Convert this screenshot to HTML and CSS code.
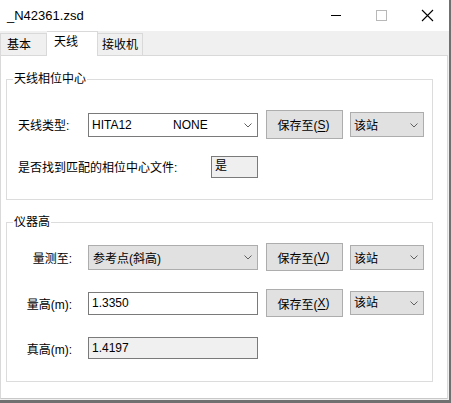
FILE: index.html
```html
<!DOCTYPE html>
<html lang="zh">
<head>
<meta charset="utf-8">
<link rel="stylesheet" href="styles.css">
</head>
<body>
<div class="window">
  <div class="titlebar">
    <span class="title">_N42361.zsd</span>
    <div class="controls">
      <svg class="ctl" width="46" height="31" viewBox="0 0 46 31"><line x1="20" y1="15.5" x2="30" y2="15.5" stroke="#000" stroke-width="1"/></svg>
      <svg class="ctl" width="46" height="31" viewBox="0 0 46 31"><rect x="19.5" y="10.5" width="10" height="10" fill="none" stroke="#b8b8b8" stroke-width="1"/></svg>
      <svg class="ctl" width="46" height="31" viewBox="0 0 46 31"><path d="M19 10 L30 21 M30 10 L19 21" stroke="#000" stroke-width="1.1" fill="none"/></svg>
    </div>
  </div>
  <div class="tabs">
    <div class="tab t1">基本</div>
    <div class="tab active">天线</div>
    <div class="tab t3">接收机</div>
  </div>
  <div class="page">
    <div class="group g1">
      <span class="legend">天线相位中心</span>
      <div class="row r1">
        <span class="lbl lbl-ant">天线类型:</span>
        <div class="combo edit">
          <span class="c1">HITA12</span><span>NONE</span>
          <svg class="chev" width="8" height="5" viewBox="0 0 8 5"><polyline points="0.5,0.5 4,4 7.5,0.5" fill="none" stroke="#606060" stroke-width="1"/></svg>
        </div>
        <div class="btn">保存至(<u>S</u>)</div>
        <div class="combo drop small">
          <span>该站</span>
          <svg class="chev" width="8" height="5" viewBox="0 0 8 5"><polyline points="0.5,0.5 4,4 7.5,0.5" fill="none" stroke="#606060" stroke-width="1"/></svg>
        </div>
      </div>
      <div class="row r2">
        <span class="lbl lbl-long">是否找到匹配的相位中心文件:</span>
        <div class="box">是</div>
      </div>
    </div>

    <div class="group g2">
      <span class="legend">仪器高</span>
      <div class="row q1">
        <span class="lbl lbl-r">量测至:</span>
        <div class="combo drop big">
          <span>参考点(斜高)</span>
          <svg class="chev" width="8" height="5" viewBox="0 0 8 5"><polyline points="0.5,0.5 4,4 7.5,0.5" fill="none" stroke="#606060" stroke-width="1"/></svg>
        </div>
        <div class="btn">保存至(<u>V</u>)</div>
        <div class="combo drop small">
          <span>该站</span>
          <svg class="chev" width="8" height="5" viewBox="0 0 8 5"><polyline points="0.5,0.5 4,4 7.5,0.5" fill="none" stroke="#606060" stroke-width="1"/></svg>
        </div>
      </div>
      <div class="row q2">
        <span class="lbl lbl-r">量高(m):</span>
        <div class="input">1.3350</div>
        <div class="btn">保存至(<u>X</u>)</div>
        <div class="combo drop small top">
          <span>该站</span>
          <svg class="chev" width="8" height="5" viewBox="0 0 8 5"><polyline points="0.5,0.5 4,4 7.5,0.5" fill="none" stroke="#606060" stroke-width="1"/></svg>
        </div>
      </div>
      <div class="row q3">
        <span class="lbl lbl-r">真高(m):</span>
        <div class="input ro">1.4197</div>
      </div>
    </div>
  </div>
</div>
</body>
</html>
```

FILE: styles.css
```css
html, body {
  margin: 0;
  padding: 0;
}
body {
  background: #707070;
  width: 451px;
  height: 403px;
  overflow: hidden;
  font-family: "Liberation Sans", "Noto Sans CJK SC", sans-serif;
  font-size: 12px;
  color: #000;
}
.window {
  width: 449px;
  height: 400px;
  background: #f0f0f0;
  display: flex;
  flex-direction: column;
}
.titlebar {
  height: 31px;
  background: #fff;
  display: flex;
  align-items: center;
  justify-content: space-between;
}
.title {
  font-size: 13px;
  padding-left: 7px;
  padding-bottom: 1px;
}
.controls {
  display: flex;
}
.ctl {
  display: block;
}
.tabs {
  height: 24px;
  display: flex;
  align-items: flex-end;
}
.tab {
  box-sizing: border-box;
  height: 22px;
  border: 1px solid #d9d9d9;
  border-bottom: none;
  background: #f0f0f0;
  padding: 2px 0 0 0;
  line-height: 18px;
}
.t1 {
  width: 47px;
  padding-left: 6px;
}
.t3 {
  width: 45px;
  padding-left: 4px;
  border-left: none;
}
.tab.active {
  position: relative;
  z-index: 1;
  width: 51px;
  height: 25px;
  margin-bottom: -1px;
  background: #fff;
  border-left: none;
  padding: 1px 0 0 7px;
}
.page {
  box-sizing: border-box;
  width: 448px;
  height: 344px;
  background: #fff;
  border: 1px solid #d9d9d9;
  border-bottom-color: #c8c8c8;
  padding: 23px 0 0 5px;
}
.group {
  position: relative;
  box-sizing: border-box;
  width: 427px;
  border: 1px solid #dcdcdc;
  padding-left: 11px;
}
.legend {
  position: absolute;
  top: -9px;
  left: 6px;
  background: #fff;
  padding: 0 1px;
  line-height: 16px;
}
.g1 {
  height: 121px;
  padding-top: 30px;
}
.g2 {
  height: 160px;
  margin-top: 22px;
  padding-top: 20px;
}
.row {
  display: flex;
  align-items: center;
}
.r1 { height: 29px; }
.r2 { height: 22px; margin-top: 17px; }
.q1 { height: 28px; }
.q2 { height: 28px; margin-top: 18px; }
.q3 { height: 22px; margin-top: 20px; }

.lbl {
  white-space: nowrap;
  box-sizing: border-box;
}
.lbl-ant { width: 70px; padding-bottom: 1px; }
.lbl-long { width: 193px; padding-bottom: 2px; }
.lbl-r {
  width: 54px;
  margin-right: 16px;
  text-align: right;
}
.combo, .input, .box, .btn {
  box-sizing: border-box;
  white-space: nowrap;
}
.combo {
  display: flex;
  align-items: center;
  position: relative;
  padding-left: 3px;
}
.combo .chev {
  position: absolute;
  right: 5px;
  top: 50%;
  margin-top: -2px;
}
.combo.edit {
  width: 170px;
  height: 24px;
  background: #fff;
  border: 1px solid #7a7a7a;
}
.c1 {
  display: inline-block;
  width: 81px;
}
.combo.drop {
  background: #e1e1e1;
  border: 1px solid #adadad;
}
.combo.big {
  width: 170px;
  height: 25px;
  padding-left: 4px;
}
.combo.small {
  width: 74px;
  height: 25px;
  margin-left: 7px;
}
.combo.small.top {
  height: 24px;
  align-items: flex-start;
  padding-top: 1px;
}
.btn {
  width: 77px;
  height: 29px;
  margin-left: 8px;
  background: #e1e1e1;
  border: 1px solid #adadad;
  display: flex;
  align-items: center;
  justify-content: center;
  padding-right: 2px;
}
.q1 .btn, .q2 .btn { height: 28px; }
.btn u {
  text-decoration-thickness: 1px;
  text-underline-offset: 2px;
}
.box {
  width: 47px;
  height: 22px;
  background: #efefef;
  border: 1px solid #7a7a7a;
  padding-left: 3px;
  line-height: 18px;
}
.input {
  width: 170px;
  height: 23px;
  background: #fff;
  border: 1px solid #7a7a7a;
  padding-left: 3px;
  display: flex;
  align-items: center;
}
.input.ro {
  height: 22px;
  background: #f0f0f0;
}
```
